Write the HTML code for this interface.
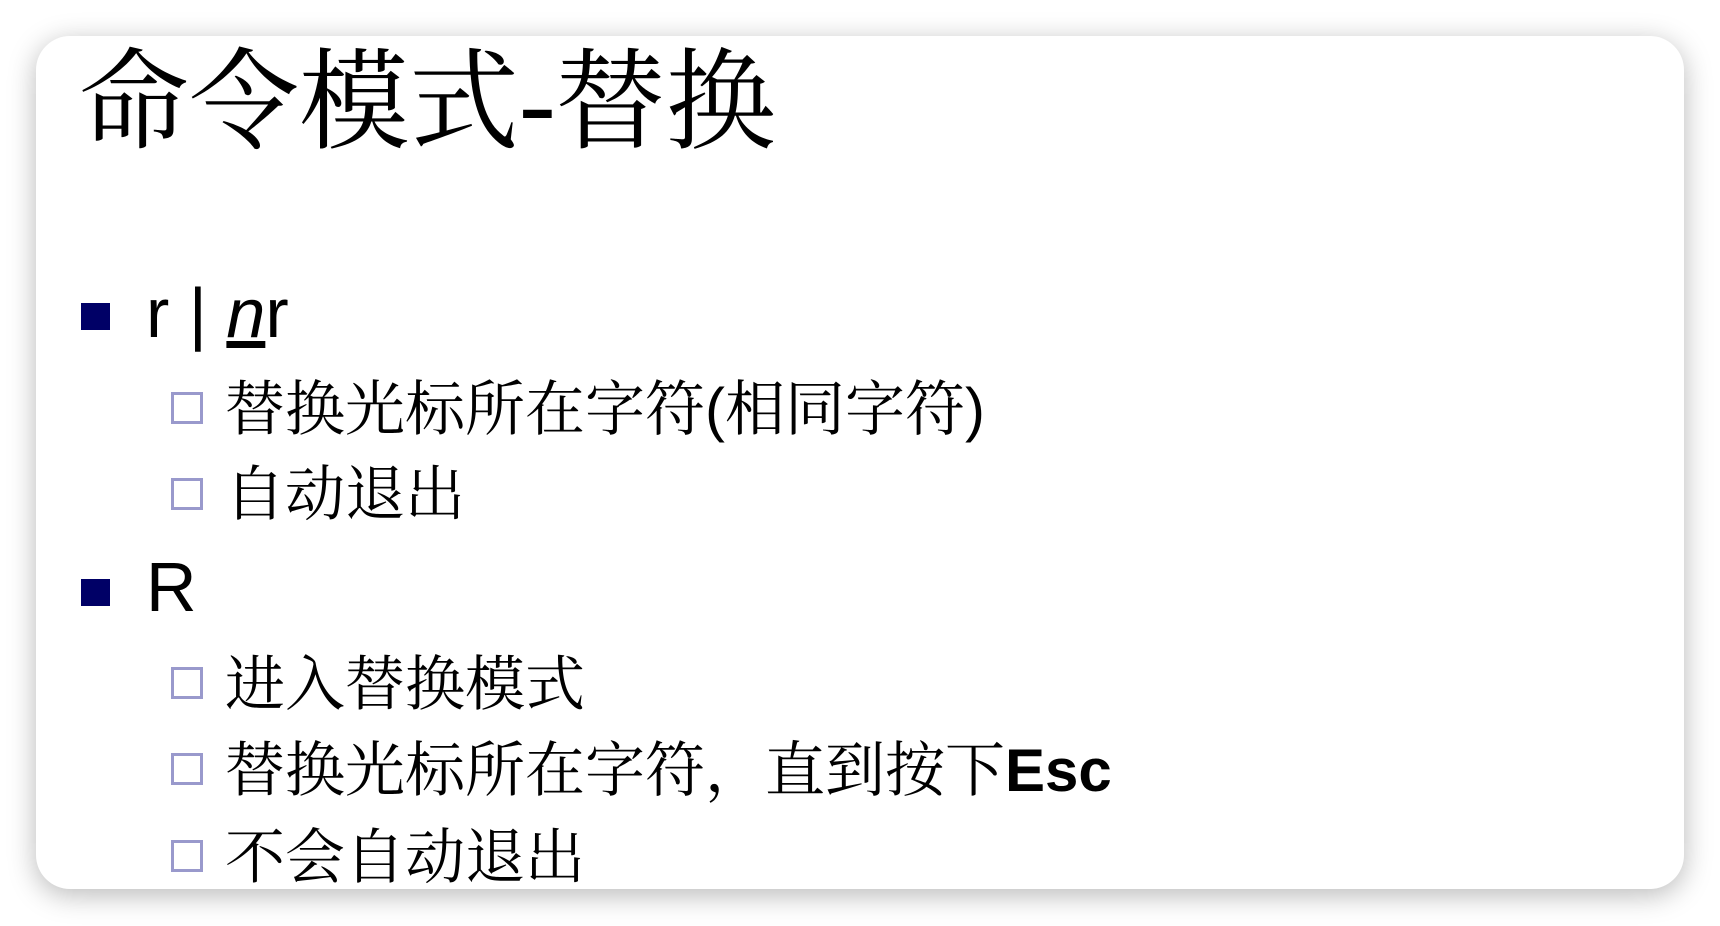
<!DOCTYPE html>
<html><head><meta charset="utf-8"><style>
html,body{margin:0;padding:0;background:#fff;width:1720px;height:926px;overflow:hidden}
.card{position:absolute;left:36px;top:36px;width:1648px;height:853px;background:#fff;border-radius:34px;box-shadow:0 6px 28px rgba(0,0,0,0.28)}
.t{position:absolute;white-space:nowrap;line-height:1;color:#000}
.title{left:79px;top:48px;font-size:110px;font-family:"Liberation Serif","Noto Serif CJK SC",serif}
.l1{left:146px;font-size:70px;font-family:"Liberation Sans","Noto Sans CJK SC",sans-serif}
.l2{left:225px;font-size:60px;font-family:"Liberation Sans","Noto Serif CJK SC",serif}
.sq{position:absolute;left:81px;width:29px;height:27px;background:#000066}
.hs{position:absolute;left:171px;width:26px;height:26px;border:3px solid #9999cc}
</style></head><body>
<div class="card"></div>
<div class="t title">命令模式-替换</div>
<div class="sq" style="top:303px"></div>
<div class="t l1" style="top:278px">r | <span style="font-style:italic;text-decoration:underline">n</span>r</div>
<div class="hs" style="top:392px"></div>
<div class="t l2" style="top:380px">替换光标所在字符(相同字符)</div>
<div class="hs" style="top:478px"></div>
<div class="t l2" style="top:465px">自动退出</div>
<div class="sq" style="top:579px"></div>
<div class="t l1" style="top:552px">R</div>
<div class="hs" style="top:667px"></div>
<div class="t l2" style="top:655px">进入替换模式</div>
<div class="hs" style="top:753px"></div>
<div class="t l2" style="top:741px">替换光标所在字符，直到按下<b>Esc</b></div>
<div class="hs" style="top:840px"></div>
<div class="t l2" style="top:828px">不会自动退出</div>
</body></html>
